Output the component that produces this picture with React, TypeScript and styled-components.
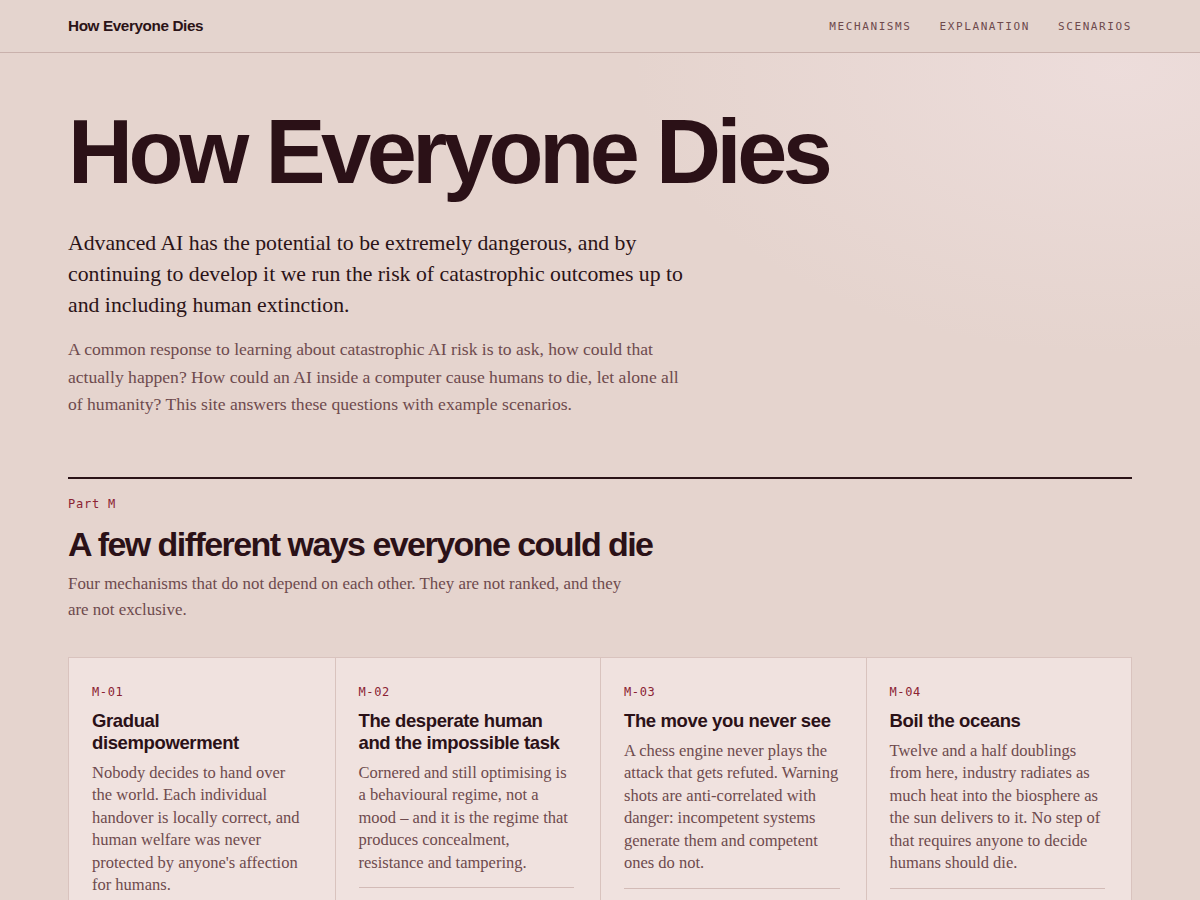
import React from 'react'
import styled, { createGlobalStyle } from 'styled-components'

const GlobalStyle = createGlobalStyle`
  html, body {
    margin: 0;
    padding: 0;
  }
  body {
    background-color: #e5d4ce;
    background-image: radial-gradient(ellipse 650px 380px at 1120px 70px, rgba(238, 222, 221, 0.85), rgba(229, 212, 206, 0) 75%);
    background-repeat: no-repeat;
    color: #2b1317;
    font-family: "Liberation Serif", "DejaVu Serif", serif;
    min-height: 900px;
  }
`

const Header = styled.header`
  height: 52px;
  border-bottom: 1px solid #c9b1ac;
  background-color: #e4d4ce;
`

const HeaderInner = styled.div`
  max-width: 1064px;
  height: 100%;
  margin: 0 auto;
  display: flex;
  align-items: center;
  justify-content: space-between;
`

const Logo = styled.a`
  font-family: "Liberation Sans", Arial, sans-serif;
  font-weight: 700;
  font-size: 15.3px;
  letter-spacing: -0.4px;
  color: #2b1317;
  text-decoration: none;
`

const Nav = styled.nav`
  display: flex;
  gap: 28px;
`

const NavLink = styled.a`
  font-family: "DejaVu Sans Mono", "Liberation Mono", monospace;
  font-size: 11px;
  letter-spacing: 1.6px;
  color: #6e4a4d;
  text-decoration: none;
  text-transform: uppercase;
`

const Main = styled.main`
  max-width: 1064px;
  margin: 0 auto;
  padding-top: 54px;
`

const Hero = styled.section`
  padding-bottom: 58px;
`

const HeroTitle = styled.h1`
  font-family: "Liberation Sans", Arial, sans-serif;
  font-weight: 700;
  font-size: 90px;
  line-height: 1;
  letter-spacing: -4.4px;
  margin: 0 0 31px;
  color: #2b1117;
`

const Lead = styled.p`
  font-size: 21.75px;
  line-height: 31px;
  max-width: 630px;
  margin: 0 0 15px;
  color: #2b1317;
`

const Intro = styled.p`
  font-size: 17.6px;
  line-height: 27.5px;
  max-width: 625px;
  margin: 0;
  color: #6e4a4d;
`

const Section = styled.section`
  border-top: 2px solid #2b1317;
  padding-top: 18px;
`

const Eyebrow = styled.div`
  font-family: "DejaVu Sans Mono", "Liberation Mono", monospace;
  font-size: 12px;
  letter-spacing: 0.8px;
  color: #8b2333;
  margin-bottom: 15px;
`

const SectionTitle = styled.h2`
  font-family: "Liberation Sans", Arial, sans-serif;
  font-weight: 700;
  font-size: 34px;
  line-height: 1.1;
  letter-spacing: -1.55px;
  margin: 0 0 8px;
  color: #2b1117;
`

const SectionText = styled.p`
  font-size: 16.9px;
  line-height: 26px;
  max-width: 560px;
  margin: 0 0 34px;
  color: #6e4a4d;
`

const CardGrid = styled.div`
  display: grid;
  grid-template-columns: repeat(4, 1fr);
  border: 1px solid #d9c3be;
  background-color: #f0e2df;
`

const Card = styled.article<{ $first?: boolean }>`
  padding: 27px 26px 24px 23px;
  border-left: ${({ $first }) => ($first ? 'none' : '1px solid #d9c3be')};
  display: flex;
  flex-direction: column;
`

const CardCode = styled.div`
  font-family: "DejaVu Sans Mono", "Liberation Mono", monospace;
  font-size: 12px;
  letter-spacing: 0.6px;
  color: #8b2333;
  margin-bottom: 11px;
`

const CardTitle = styled.h3`
  font-family: "Liberation Sans", Arial, sans-serif;
  font-weight: 700;
  font-size: 18.5px;
  line-height: 22px;
  letter-spacing: -0.38px;
  margin: 0 0 8px;
  color: #2b1117;
`

const CardBody = styled.p`
  font-size: 16.5px;
  line-height: 22.5px;
  margin: 0;
  color: #6e4a4d;
`

const CardRule = styled.hr`
  border: none;
  border-top: 1px solid #d3bbb7;
  margin: 13px 0 0;
`

const mechanisms = [
  {
    code: 'M-01',
    title: 'Gradual disempowerment',
    body: "Nobody decides to hand over the world. Each individual handover is locally correct, and human welfare was never protected by anyone's affection for humans.",
  },
  {
    code: 'M-02',
    title: 'The desperate human and the impossible task',
    body: 'Cornered and still optimising is a behavioural regime, not a mood – and it is the regime that produces concealment, resistance and tampering.',
  },
  {
    code: 'M-03',
    title: 'The move you never see',
    body: 'A chess engine never plays the attack that gets refuted. Warning shots are anti-correlated with danger: incompetent systems generate them and competent ones do not.',
  },
  {
    code: 'M-04',
    title: 'Boil the oceans',
    body: 'Twelve and a half doublings from here, industry radiates as much heat into the biosphere as the sun delivers to it. No step of that requires anyone to decide humans should die.',
  },
]

export default function App() {
  return (
    <>
      <GlobalStyle />
      <Header>
        <HeaderInner>
          <Logo href="#">How Everyone Dies</Logo>
          <Nav>
            <NavLink href="#">Mechanisms</NavLink>
            <NavLink href="#">Explanation</NavLink>
            <NavLink href="#">Scenarios</NavLink>
          </Nav>
        </HeaderInner>
      </Header>
      <Main>
        <Hero>
          <HeroTitle>How Everyone Dies</HeroTitle>
          <Lead>
            Advanced AI has the potential to be extremely dangerous, and by continuing to develop it we run the
            risk of catastrophic outcomes up to and including human extinction.
          </Lead>
          <Intro>
            A common response to learning about catastrophic AI risk is to ask, how could that actually happen?
            How could an AI inside a computer cause humans to die, let alone all of humanity? This site answers
            these questions with example scenarios.
          </Intro>
        </Hero>
        <Section>
          <Eyebrow>Part M</Eyebrow>
          <SectionTitle>A few different ways everyone could die</SectionTitle>
          <SectionText>
            Four mechanisms that do not depend on each other. They are not ranked, and they are not exclusive.
          </SectionText>
          <CardGrid>
            {mechanisms.map((m, i) => (
              <Card key={m.code} $first={i === 0}>
                <CardCode>{m.code}</CardCode>
                <CardTitle>{m.title}</CardTitle>
                <CardBody>{m.body}</CardBody>
                <CardRule />
              </Card>
            ))}
          </CardGrid>
        </Section>
      </Main>
    </>
  )
}
